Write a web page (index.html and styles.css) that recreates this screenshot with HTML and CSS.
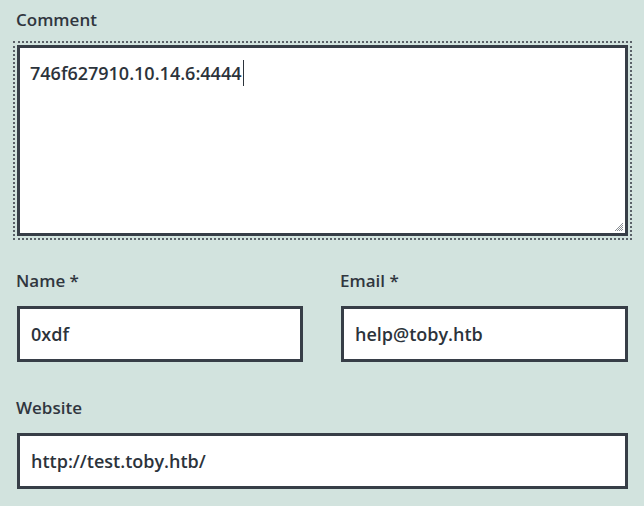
FILE: index.html
```html
<!DOCTYPE html>
<html lang="en">
<head>
<meta charset="utf-8">
<title>Comment form</title>
<link rel="stylesheet" href="styles.css">
</head>
<body>
<form class="form">
  <div class="field field-comment">
    <label class="label">Comment</label>
    <div class="comment-wrap">
      <div class="comment-box">746f627910.10.14.6:4444<span class="caret"></span></div>
      <svg class="grip" width="10" height="10" viewBox="0 0 10 10">
        <path d="M9 1 L1 9 M9 3 L3 9 M9 5 L5 9 M9 7 L7 9" stroke="#8a8f94" stroke-width="1"/>
      </svg>
    </div>
  </div>
  <div class="row">
    <div class="field">
      <label class="label">Name *</label>
      <input class="input" type="text" value="0xdf">
    </div>
    <div class="field">
      <label class="label">Email *</label>
      <input class="input" type="text" value="help@toby.htb">
    </div>
  </div>
  <div class="field">
    <label class="label">Website</label>
    <input class="input" type="text" value="http://test.toby.htb/">
  </div>
</form>
</body>
</html>
```
FILE: styles.css
```css
html, body {
  margin: 0;
  padding: 0;
  background: #d2e3de;
}
body {
  font-family: "Open Sans", "DejaVu Sans", sans-serif;
  color: #30363e;
}
.form {
  padding: 9px 16px 0 17px;
  display: flex;
  flex-direction: column;
}
.field-comment {
  margin-bottom: 34px;
}
.row {
  display: grid;
  grid-template-columns: 286px 1fr;
  column-gap: 38px;
  margin-bottom: 35px;
}
.field {
  display: flex;
  flex-direction: column;
}
.label {
  font-size: 17px;
  font-weight: 600;
  line-height: 22px;
  margin-left: -1px;
  margin-bottom: 14px;
}
.comment-wrap {
  position: relative;
  outline: 2px dotted #5a6168;
  outline-offset: 2px;
}
.comment-box {
  box-sizing: border-box;
  height: 191px;
  border: 3px solid #373e47;
  background: #fff;
  padding: 11px 10px;
  font-size: 18px;
  font-weight: 600;
  line-height: 28px;
  color: #2c333b;
}
.caret {
  display: inline-block;
  width: 1px;
  height: 26px;
  background: #2c333b;
  vertical-align: -6px;
  margin-left: 1px;
}
.grip {
  position: absolute;
  right: 4px;
  bottom: 4px;
}
.input {
  box-sizing: border-box;
  width: 100%;
  height: 56px;
  border: 3px solid #373e47;
  border-radius: 0;
  background: #fff;
  padding: 0 11px;
  font-family: "Open Sans", "DejaVu Sans", sans-serif;
  font-size: 18px;
  font-weight: 600;
  color: #2c333b;
  margin: 0;
  outline: none;
}
```
